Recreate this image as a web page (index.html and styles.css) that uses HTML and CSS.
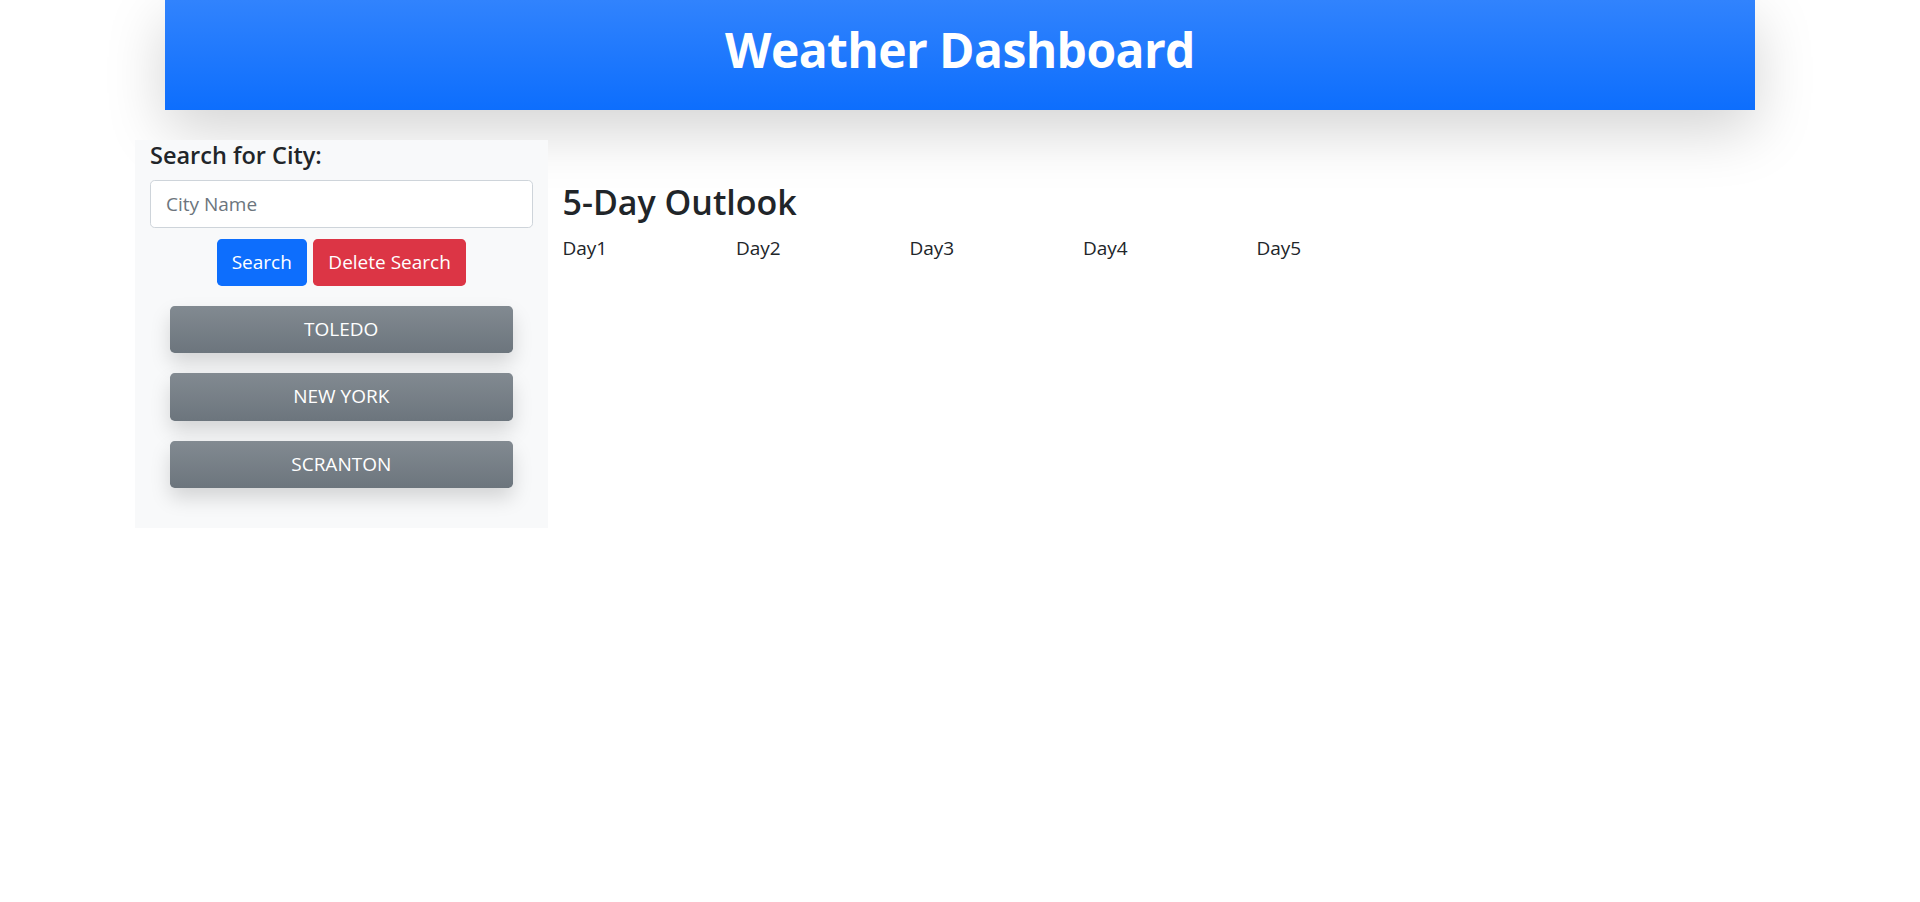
FILE: index.html
```html
<!DOCTYPE html>
<html lang="en">
<head>
<meta charset="utf-8">
<title>Weather Dashboard</title>
<link rel="stylesheet" href="styles.css">
</head>
<body>
<header class="header">
  <h1 class="header-title">Weather Dashboard</h1>
</header>
<div class="layout">
  <aside class="sidebar">
    <h5 class="search-label">Search for City:</h5>
    <input class="city-input" type="text" placeholder="City Name">
    <div class="btn-row">
      <button class="btn btn-primary">Search</button>
      <button class="btn btn-danger">Delete Search</button>
    </div>
    <div class="cities">
      <button class="city-btn">TOLEDO</button>
      <button class="city-btn">NEW YORK</button>
      <button class="city-btn">SCRANTON</button>
    </div>
  </aside>
  <main class="main">
    <h3 class="outlook-title">5-Day Outlook</h3>
    <div class="days">
      <div class="day">Day1</div>
      <div class="day">Day2</div>
      <div class="day">Day3</div>
      <div class="day">Day4</div>
      <div class="day">Day5</div>
    </div>
  </main>
</div>
</body>
</html>
```

FILE: styles.css
```css
* { box-sizing: border-box; }

body {
  margin: 0;
  background: #fff;
  color: #212529;
  font-family: "Open Sans", "Noto Sans", sans-serif;
  font-size: 20px;
  line-height: 1.5;
}

.header {
  width: 1590px;
  height: 110px;
  margin: 0 auto;
  padding-top: 20px;
  background: linear-gradient(180deg, #3183fd 0%, #0d6efd 100%);
  box-shadow: 0 20px 60px rgba(0, 0, 0, 0.175);
  text-align: center;
}

.header-title {
  margin: 0;
  color: #fff;
  font-size: 48px;
  font-weight: 700;
  line-height: 60px;
  letter-spacing: -0.6px;
}

.layout {
  width: 1650px;
  margin: 30px auto 0;
  display: flex;
  align-items: flex-start;
}

.sidebar {
  width: 412.5px;
  flex: none;
  padding: 0 15px 40px;
  background: #f8f9fa;
}

.search-label {
  margin: 0 0 10px;
  font-size: 23.5px;
  font-weight: 600;
  line-height: 30px;
}

.city-input {
  display: block;
  width: 100%;
  height: 47.5px;
  padding: 0 15px;
  border: 1.25px solid #ced4da;
  border-radius: 4.7px;
  background: #fff;
  font-family: inherit;
  font-size: 19px;
  color: #212529;
}

.city-input::placeholder { color: #6c757d; }

.btn-row {
  display: flex;
  justify-content: center;
  gap: 6.5px;
  margin-top: 11px;
}

.btn {
  height: 47px;
  padding: 0 15px;
  border: none;
  border-radius: 4.7px;
  color: #fff;
  font-family: inherit;
  font-size: 19px;
  line-height: 1;
}

.btn-primary { background: #0d6efd; }
.btn-danger { background: #dc3545; }

.cities {
  display: flex;
  flex-direction: column;
  gap: 20px;
  margin: 20px 20px 0;
}

.city-btn {
  height: 47.5px;
  border: none;
  border-radius: 4.7px;
  background: linear-gradient(180deg, #828a91 0%, #6c757d 100%);
  box-shadow: 0 10px 20px rgba(0, 0, 0, 0.15);
  color: #fff;
  font-family: inherit;
  font-size: 19px;
  line-height: 1;
}

.main {
  flex: 1;
  padding: 41px 15px 0;
}

.outlook-title {
  margin: 0 0 10px;
  font-size: 34px;
  font-weight: 600;
  line-height: 42px;
}

.days {
  display: flex;
}

.day {
  width: 173.5px;
  flex: none;
  font-size: 19px;
  line-height: 30px;
}
```
